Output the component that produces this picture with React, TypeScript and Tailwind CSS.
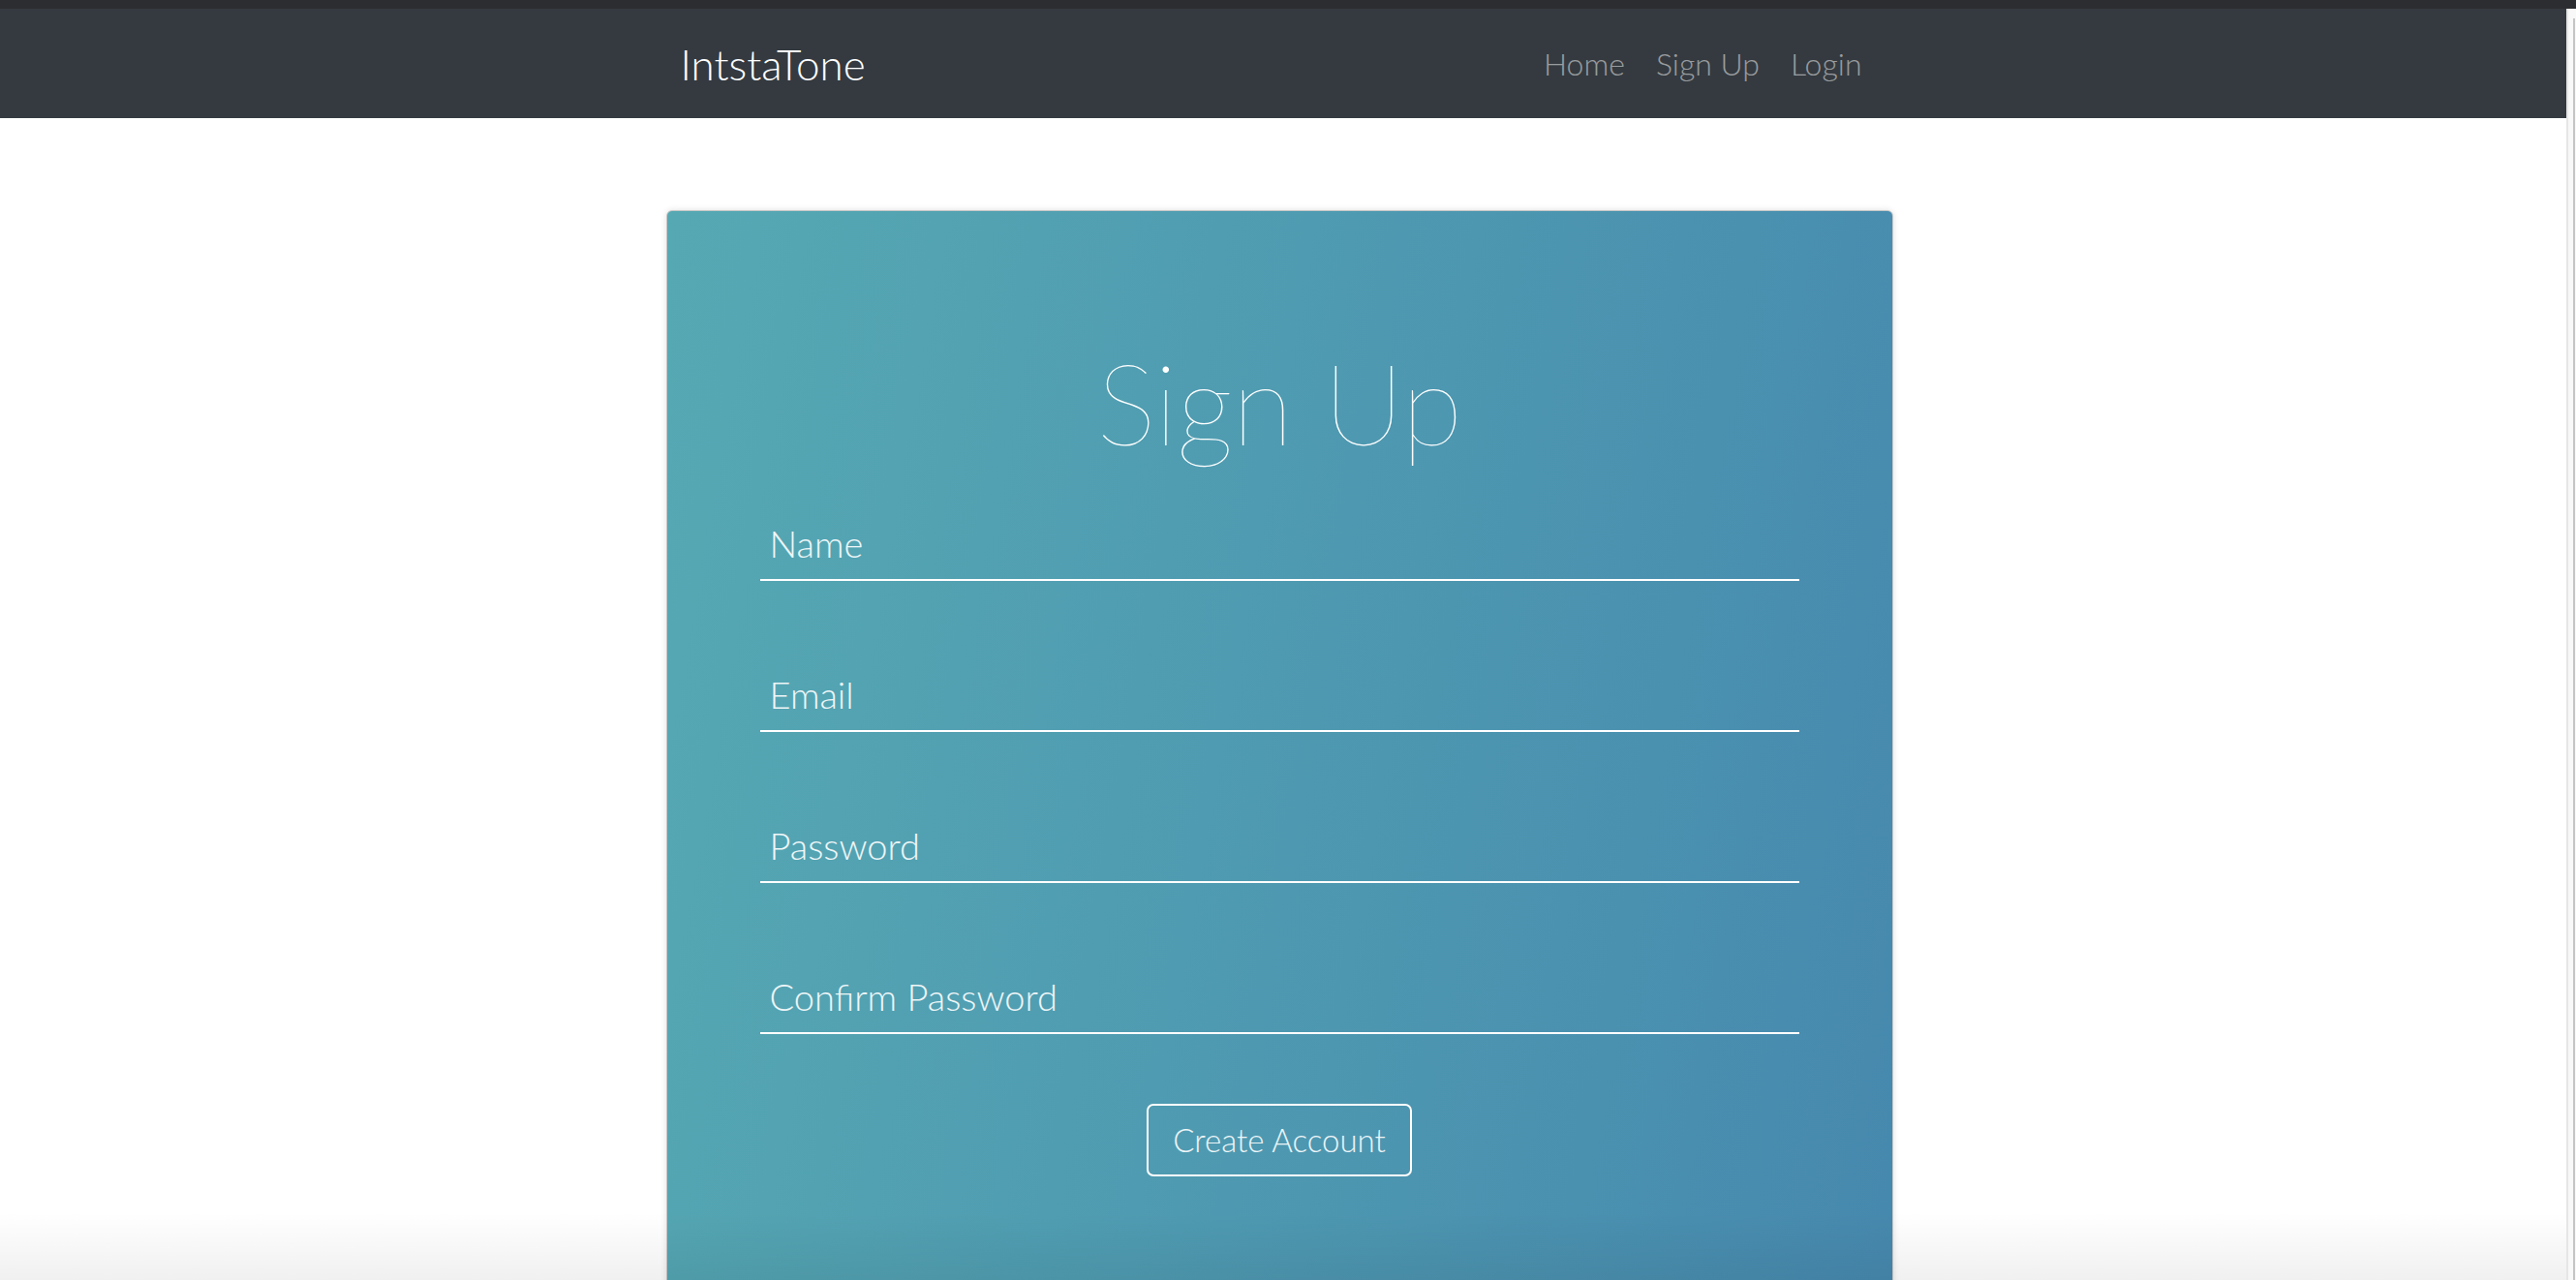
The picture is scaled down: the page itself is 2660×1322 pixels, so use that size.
import React from 'react';

const fields = ['Name', 'Email', 'Password', 'Confirm Password'];

const Navbar: React.FC = () => {
  return (
    <nav className="h-[113px] bg-[#343a40]">
      <div className="w-[1267px] h-full mx-auto translate-x-[-4px] flex items-center justify-between px-[15px]">
        <a className="text-[44px] font-light text-white">IntstaTone</a>
        <div className="flex items-center">
          <a className="px-[16px] text-[32px] font-light text-white/50">Home</a>
          <a className="px-[16px] text-[32px] font-light text-white/50">Sign Up</a>
          <a className="pl-[16px] pr-[17px] text-[32px] font-light text-white/50">Login</a>
        </div>
      </div>
    </nav>
  );
};

const SignUpCard: React.FC = () => {
  return (
    <div className="w-[1267px] mx-auto translate-x-[-4px] mt-[95px] rounded-[6px] border border-[#c9c9c9] shadow-[0_0_6px_rgba(0,0,0,0.12)] bg-[linear-gradient(100deg,#56a9b3_0%,#4f9bb1_45%,#4688ae_100%)] px-[96px] pt-[128px] pb-[240px]">
      <h1 className="text-center text-white text-[116px] font-thin leading-[1.2] tracking-[-1px]">Sign Up</h1>
      <form className="mt-[45px] flex flex-col gap-[86px]" onSubmit={(e) => e.preventDefault()}>
        {fields.map((f) => (
          <input
            key={f}
            type={f.includes('Password') ? 'password' : 'text'}
            placeholder={f}
            className="h-[70px] w-full bg-transparent border-0 border-b-2 border-white px-[10px] pb-[6px] text-[38px] font-light text-white placeholder:text-white/90 outline-none"
          />
        ))}
      </form>
      <div className="mt-[72px] flex justify-center">
        <button className="h-[75px] px-[25px] rounded-[7px] border-2 border-white text-[33px] font-light text-white/90">
          Create Account
        </button>
      </div>
    </div>
  );
};

export default function App() {
  return (
    <div className="w-[2660px] h-[1322px] overflow-hidden bg-white font-['Lato','Liberation_Sans',sans-serif] relative">
      <div className="h-[9px] bg-[#2c2d30]" />
      <div className="flex h-[1313px]">
        <div className="w-[2650px] h-full">
          <Navbar />
          <SignUpCard />
        </div>
        <div className="w-[10px] h-full bg-[#f8f8f8] border-l-2 border-[#e6e6e6] flex justify-end pr-[1px] pt-[10px]">
          <div className="w-[2px] h-full bg-[#c4c4c4]" />
        </div>
      </div>
      <div className="pointer-events-none absolute left-0 right-[10px] bottom-0 h-[70px] bg-[linear-gradient(to_bottom,rgba(0,0,0,0),rgba(0,0,0,0.06))]" />
    </div>
  );
}
